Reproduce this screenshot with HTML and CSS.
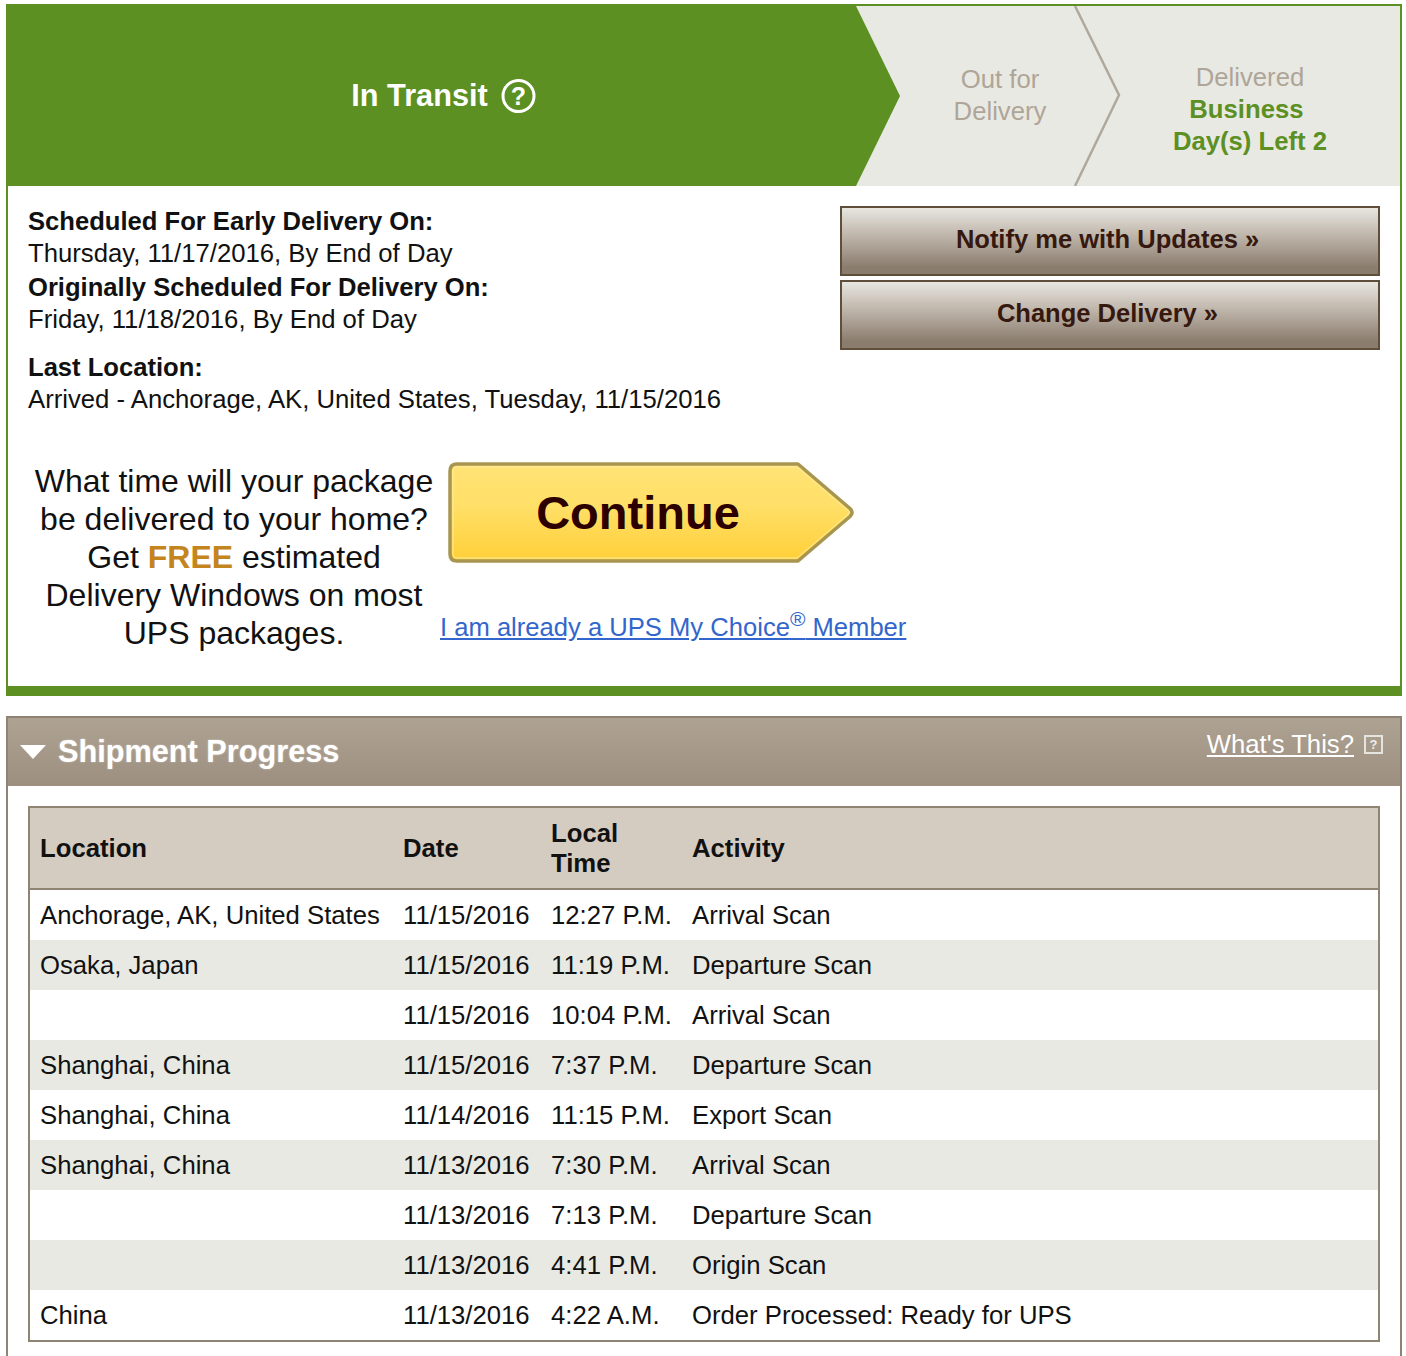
FILE: index.html
```html
<!DOCTYPE html>
<html lang="en">
<head>
<meta charset="UTF-8">
<title>Shipment Progress</title>
<link rel="stylesheet" href="styles.css">
</head>
<body>

<!-- 配送ステータス -->
<section class="status-card">
    <div class="steps">
        <div class="step step-current">
            <span>In Transit</span>
            <svg class="help-icon" width="36" height="36" viewBox="0 0 36 36">
                <circle cx="17.5" cy="18" r="15.5" fill="none" stroke="#fff" stroke-width="3"/>
                <text x="17.5" y="27" text-anchor="middle" class="help-mark">?</text>
            </svg>
        </div>
        <div class="step step-next">
            <span>Out for<br>Delivery</span>
            <svg class="step-line" width="48" height="180" viewBox="0 0 48 180">
                <polyline points="1,0 45,89 1,180" fill="none" stroke="#b1a89c" stroke-width="2.5"/>
            </svg>
        </div>
        <div class="step step-last">
            <span>Delivered<br><b>Business&nbsp;<br>Day(s) Left 2</b></span>
        </div>
    </div>

    <div class="details">
        <div class="details-text">
            <p><b>Scheduled For Early Delivery On:</b><br>
            Thursday, 11/17/2016, By End of Day</p>
            <p class="original-date"><b>Originally Scheduled For Delivery On:</b><br>
            Friday, 11/18/2016, By End of Day</p>
            <p class="last-location"><b>Last Location:</b><br>
            Arrived - Anchorage, AK, United States, Tuesday, 11/15/2016</p>
        </div>
        <div class="details-actions">
            <a class="action-btn" href="#">Notify me with Updates »</a>
            <a class="action-btn" href="#">Change Delivery »</a>
        </div>
    </div>

    <div class="promo">
        <p class="promo-text">What time will your package be delivered to your home? Get <b>FREE</b> estimated Delivery Windows on most UPS packages.</p>
        <div class="promo-side">
            <a class="continue-btn" href="#">
                <svg class="continue-shape" width="406" height="102" viewBox="0 0 406 102">
                    <defs>
                        <linearGradient id="continue-fill" x1="0" y1="0" x2="0" y2="1">
                            <stop offset="0" stop-color="#ffe376"/>
                            <stop offset="0.45" stop-color="#ffdf66"/>
                            <stop offset="1" stop-color="#ffcf38"/>
                        </linearGradient>
                    </defs>
                    <path d="M9 2 H350 L402 46.5 Q406 50.5 402 54.5 L350 99 H9 Q2 99 2 92 V9 Q2 2 9 2 Z" fill="url(#continue-fill)" stroke="#a89650" stroke-width="3.5" stroke-linejoin="round"/>
                    <path d="M9 5 H349 L400 48.5 Q402 50.5 400 52.5 L349 96 H9 Q5 96 5 92 V9 Q5 5 9 5 Z" fill="none" stroke="#ffeb9c" stroke-width="1"/>
                </svg>
                <span>Continue</span>
            </a>
            <a class="member-link" href="#">I am already a UPS My Choice<sup>®</sup> Member</a>
        </div>
    </div>
</section>

<!-- 輸送履歴 -->
<section class="progress">
    <div class="progress-head">
        <h2><span class="arrow"></span>Shipment Progress</h2>
        <div class="whats-this">
            <a href="#">What's This?</a>
            <span class="whats-icon">?</span>
        </div>
    </div>
    <div class="progress-body">
        <table class="scan-table">
            <colgroup>
                <col class="col-location">
                <col class="col-date">
                <col class="col-time">
                <col>
            </colgroup>
            <thead>
                <tr><th>Location</th><th>Date</th><th>Local<br>Time</th><th>Activity</th></tr>
            </thead>
            <tbody>
                <tr><td>Anchorage, AK, United States</td><td>11/15/2016</td><td>12:27 P.M.</td><td>Arrival Scan</td></tr>
                <tr><td>Osaka, Japan</td><td>11/15/2016</td><td>11:19 P.M.</td><td>Departure Scan</td></tr>
                <tr><td></td><td>11/15/2016</td><td>10:04 P.M.</td><td>Arrival Scan</td></tr>
                <tr><td>Shanghai, China</td><td>11/15/2016</td><td>7:37 P.M.</td><td>Departure Scan</td></tr>
                <tr><td>Shanghai, China</td><td>11/14/2016</td><td>11:15 P.M.</td><td>Export Scan</td></tr>
                <tr><td>Shanghai, China</td><td>11/13/2016</td><td>7:30 P.M.</td><td>Arrival Scan</td></tr>
                <tr><td></td><td>11/13/2016</td><td>7:13 P.M.</td><td>Departure Scan</td></tr>
                <tr><td></td><td>11/13/2016</td><td>4:41 P.M.</td><td>Origin Scan</td></tr>
                <tr><td>China</td><td>11/13/2016</td><td>4:22 A.M.</td><td>Order Processed: Ready for UPS</td></tr>
            </tbody>
        </table>
    </div>
</section>

</body>
</html>
```

FILE: styles.css
```css
/* 全体 */
html, body {
    height: 1356px;
    overflow: hidden;
}
body {
    margin: 0;
    padding: 4px 4px 0 6px;
    box-sizing: border-box;
    background-color: #fff;
    color: #111;
    font-family: "Liberation Sans", Arial, sans-serif;
    font-size: 25.7px;
    line-height: 32px;
}
p {
    margin: 0;
}

/* ステータスカード */
.status-card {
    height: 692px;
    box-sizing: border-box;
    border: 2px solid #5c9022;
    border-bottom-width: 10px;
}

/* ステップ */
.steps {
    display: flex;
    height: 180px;
    background-color: #e9e9e3;
    text-align: center;
}
.step {
    display: flex;
    align-items: center;
    justify-content: center;
    box-sizing: border-box;
    color: #aea598;
}
.step-current {
    flex: 0 0 892px;
    gap: 13px;
    padding-right: 20px;
    background-color: #5c9022;
    color: #fff;
    font-size: 30.7px;
    font-weight: bold;
    clip-path: polygon(0 0, 848px 0, 100% 50%, 848px 100%, 0 100%);
}
.help-icon {
    flex: none;
}
.help-mark {
    font-size: 25px;
    font-weight: bold;
    fill: #fff;
}
.step-next {
    position: relative;
    flex: 0 0 240px;
    margin-left: -20px;
    padding-bottom: 2px;
}
.step-line {
    position: absolute;
    top: 0;
    right: -2px;
}
.step-last {
    flex: 0 0 260px;
    padding-top: 26px;
}
.step-last b {
    color: #5c9022;
}

/* 配送情報 */
.details {
    display: flex;
    justify-content: space-between;
    padding: 19px 20px 0;
}
.details-text b {
    font-size: 25.6px;
}
.original-date {
    margin-top: 2px;
}
.last-location {
    margin-top: 16px;
}
.details-actions {
    display: flex;
    flex-direction: column;
    gap: 4px;
    padding-top: 1px;
}
.action-btn {
    display: flex;
    align-items: center;
    justify-content: center;
    box-sizing: border-box;
    width: 540px;
    height: 70px;
    padding: 0 5px 4px 0;
    border: 2px solid #5f4f3a;
    background: linear-gradient(#e7e6e1, #bfb5aa 42%, #8a7d6e 90%);
    color: #36180f;
    font-size: 25.5px;
    font-weight: bold;
    text-decoration: none;
}

/* 案内 */
.promo {
    display: flex;
    margin-top: 47px;
}
.promo-text {
    flex: 0 0 432px;
    padding-left: 20px;
    box-sizing: border-box;
    font-size: 32px;
    line-height: 38px;
    text-align: center;
}
.promo-text b {
    color: #c4851f;
}
.promo-side {
    display: flex;
    flex-direction: column;
    align-items: flex-start;
}
.continue-btn {
    position: relative;
    display: flex;
    align-items: center;
    justify-content: center;
    box-sizing: border-box;
    width: 406px;
    height: 102px;
    margin-left: 8px;
    padding-right: 26px;
    color: #2c0000;
    font-size: 47px;
    font-weight: bold;
    text-decoration: none;
}
.continue-shape {
    position: absolute;
    top: 0;
    left: 0;
}
.continue-btn span {
    position: relative;
}
.member-link {
    margin-top: 47px;
    color: #3366cc;
    font-size: 25.6px;
}
.member-link sup {
    font-size: 21px;
    line-height: 0;
}

/* 輸送履歴 */
.progress {
    height: 640px;
    margin-top: 20px;
    box-sizing: border-box;
    border: 2px solid #8f8474;
    border-bottom: 0;
}
.progress-head {
    display: flex;
    justify-content: space-between;
    height: 68px;
    background: linear-gradient(#aea292, #9c8f7f);
    color: #fff;
}
.progress-head h2 {
    display: flex;
    align-items: center;
    margin: 0;
    padding-left: 12px;
    font-size: 30.7px;
    text-shadow: 0 0 2px rgba(255,255,255,0.5);
}
.arrow {
    width: 0;
    height: 0;
    margin-right: 12px;
    border-left: 13px solid transparent;
    border-right: 13px solid transparent;
    border-top: 14px solid #fff;
}
.whats-this {
    display: flex;
    align-items: center;
    gap: 10px;
    height: 52px;
    padding-right: 17px;
}
.whats-this a {
    color: #fff;
}
.whats-icon {
    width: 19px;
    height: 19px;
    box-sizing: border-box;
    border: 2px solid #e6e4de;
    color: #eeeeea;
    font-size: 13px;
    font-weight: bold;
    line-height: 15px;
    text-align: center;
}
.progress-body {
    padding: 20px 20px 0;
}

/* テーブル */
.scan-table {
    width: 1352px;
    table-layout: fixed;
    border-collapse: separate;
    border-spacing: 0;
    border: 2px solid #8f8474;
}
.col-location {
    width: 363px;
}
.col-date {
    width: 148px;
}
.col-time {
    width: 141px;
}
th, td {
    padding: 0 0 0 10px;
    text-align: left;
    white-space: nowrap;
}
th {
    height: 79px;
    padding-bottom: 1px;
    border-bottom: 2px solid #8f8474;
    background-color: #d4ccc1;
    line-height: 30px;
}
td {
    height: 50px;
}
tbody tr:nth-of-type(even) {
    background-color: #e9e9e3;
}
```
